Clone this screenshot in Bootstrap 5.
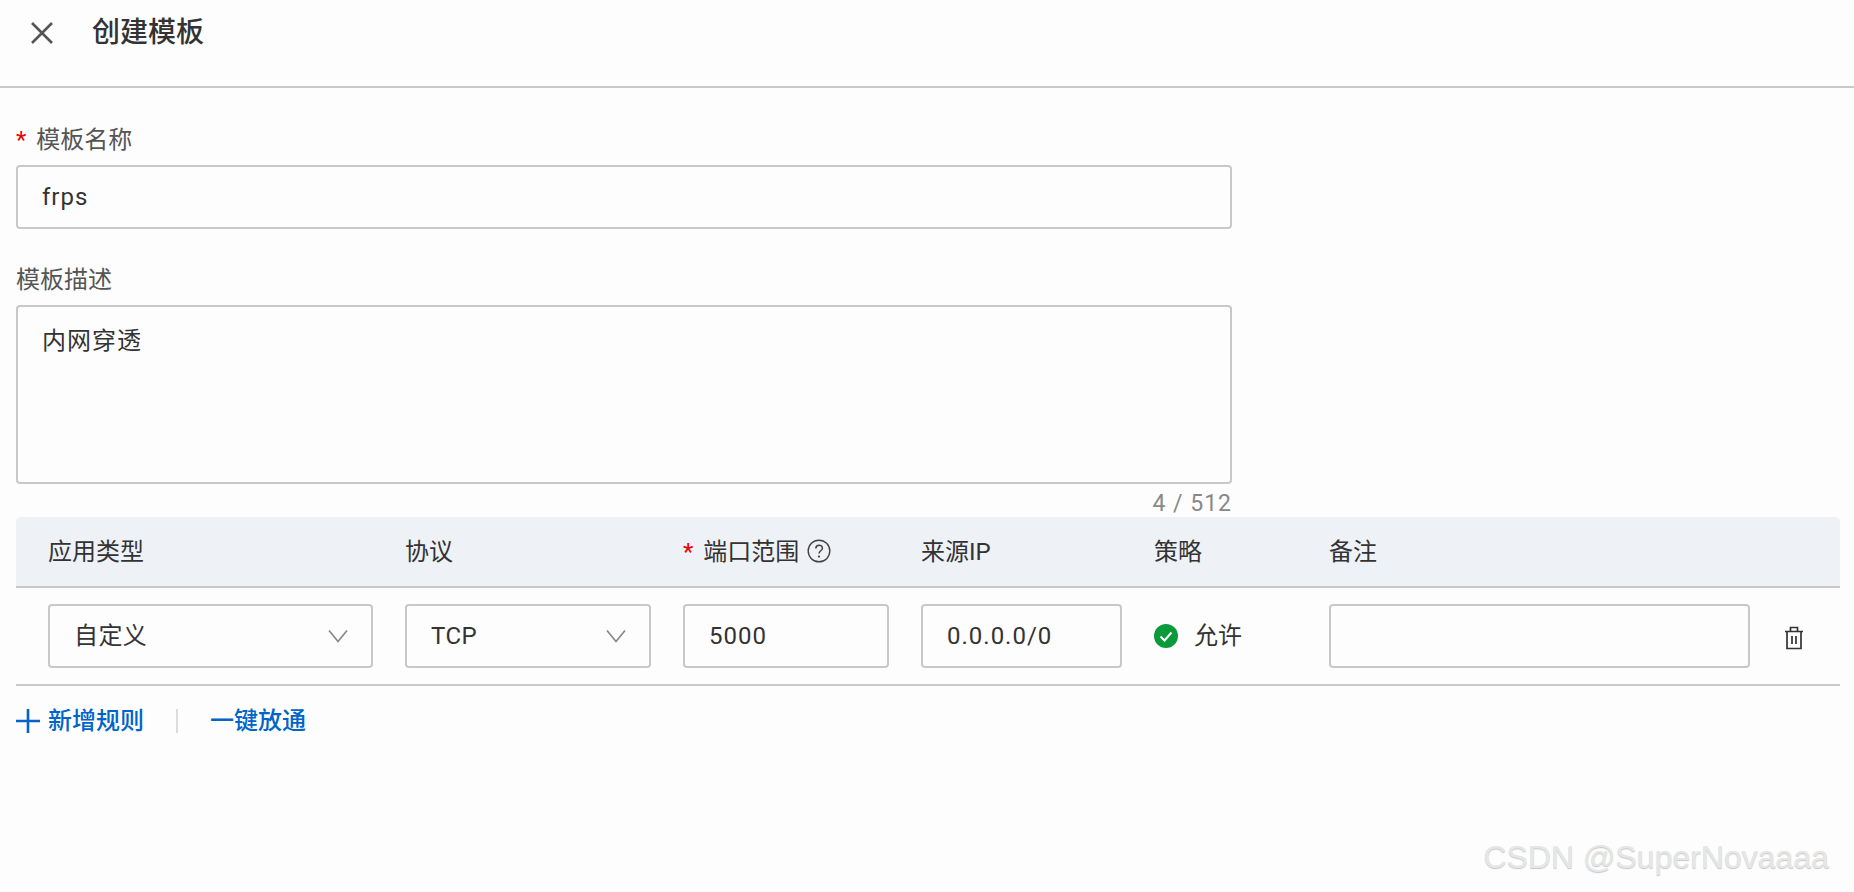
<!DOCTYPE html>
<html lang="zh">
<head>
<meta charset="utf-8">
<title>创建模板</title>
<link href="https://cdn.jsdelivr.net/npm/bootstrap@5.3.0/dist/css/bootstrap.min.css" rel="stylesheet">
<style>
html,body{height:100%}
body{background:#fdfdfd;color:#333;font-family:Roboto,"Noto Sans CJK SC",sans-serif;font-size:24px;overflow:hidden;position:relative}
.tpl-head{height:88px;border-bottom:2px solid #c9c9c9;padding:0 0 18px 29px;gap:37px}
.tpl-head h1{font-size:28px;font-weight:500;margin:0;color:#333;line-height:1;position:relative;top:-1px}
.tpl-close{margin-bottom:3px}
.tpl-body{padding:36px 14px 0 16px}
.tpl-label{font-size:24px;line-height:32px;color:#555;margin-bottom:9px;display:block}
.req{color:#e00;margin-right:10px}
.tpl-field{width:1216px}
.form-control.tpl-input,.form-select.tpl-input,.form-control.tpl-area{background-color:#fff0;border:2px solid #c8c8c8;border-radius:4px;color:#333;font-size:24px;letter-spacing:1px;box-shadow:none}
.form-control.tpl-input,.form-select.tpl-input{height:64px;padding:0 24px;line-height:60px}
.form-control.tpl-area{height:179px;padding:18px 24px;resize:none;line-height:32px}
.form-select.tpl-input{background-image:url("data:image/svg+xml,%3Csvg xmlns='http://www.w3.org/2000/svg' viewBox='0 0 20 14'%3E%3Cpath d='M1 1.5l9 11 9-11' fill='none' stroke='%23888' stroke-width='1.7'/%3E%3C/svg%3E");background-size:20px 14px;background-position:right 23px center;padding-right:50px;letter-spacing:.4px}
.tpl-name{margin-bottom:35px}
.tpl-count{font-size:23px;line-height:26px;color:#888;text-align:right;letter-spacing:1px;margin-top:7px}
.tpl-table{width:1824px;table-layout:fixed;border-collapse:separate;border-spacing:0;margin:0}
.tpl-table th{background:#eef1f6;height:71px;font-weight:400;font-size:24px;color:#333;border-bottom:2px solid #c9c9c9;padding:0;vertical-align:middle}
.tpl-table th:first-child{border-top-left-radius:5px}
.tpl-table th:last-child{border-top-right-radius:5px}
.tpl-table td{height:98px;border-bottom:2px solid #c9c9c9;padding:0;vertical-align:middle;background:transparent}
.tpl-table th:not(:last-child),.tpl-table td:not(:last-child){padding-right:32px}
.c0{width:32px}.c1{width:357px}.c2{width:278px}.c3{width:238px}.c4{width:233px}.c5{width:175px}.c6{width:453px}.c7{width:58px}
.tpl-table th:first-child,.tpl-table td:first-child{padding-right:0}
.tpl-help{vertical-align:-3px;margin-left:8px}
.tpl-allow{gap:16px}
.tpl-trash{position:relative;left:-17px}
.tpl-actions{height:70px;color:#0064c8;font-weight:500;font-size:24px}
.tpl-actions a{color:#0064c8;text-decoration:none}
.tpl-plus{margin-right:8px}
.tpl-sep{width:2px;height:24px;background:#dcdcdc;margin:0 32px}
.tpl-mark{position:absolute;right:25px;bottom:17px;font-family:"Liberation Sans",sans-serif;font-size:32px;line-height:36px;color:#e6e6e6;text-shadow:0 1px 1px #c8c8c8}
</style>
</head>
<body>
<header class="tpl-head d-flex align-items-center">
  <svg class="tpl-close" width="26" height="26" viewBox="0 0 26 26" aria-label="关闭"><path d="M3 3l20 20M23 3L3 23" stroke="#555" stroke-width="2.6" fill="none"/></svg>
  <h1>创建模板</h1>
</header>
<main class="tpl-body">
  <div class="tpl-field tpl-name">
    <label class="tpl-label"><span class="req">*</span>模板名称</label>
    <input class="form-control tpl-input" value="frps">
  </div>
  <div class="tpl-field">
    <label class="tpl-label">模板描述</label>
    <textarea class="form-control tpl-area">内网穿透</textarea>
    <div class="tpl-count">4 / 512</div>
  </div>
  <table class="tpl-table">
    <colgroup><col class="c0"><col class="c1"><col class="c2"><col class="c3"><col class="c4"><col class="c5"><col class="c6"><col class="c7"></colgroup>
    <thead>
      <tr>
        <th></th><th>应用类型</th><th>协议</th>
        <th><span class="req">*</span>端口范围<svg class="tpl-help" width="24" height="24" viewBox="0 0 24 24"><circle cx="12" cy="12" r="10.8" fill="none" stroke="#444" stroke-width="1.4"/><path d="M8.8 9.4c0-4.2 6.6-4.2 6.6-.2 0 2.6-3.4 2.6-3.4 5.4" fill="none" stroke="#444" stroke-width="1.5"/><circle cx="12" cy="17.6" r="1.1" fill="#444"/></svg></th>
        <th>来源IP</th><th>策略</th><th>备注</th><th></th>
      </tr>
    </thead>
    <tbody>
      <tr>
        <td></td>
        <td><select class="form-select tpl-input"><option>自定义</option></select></td>
        <td><select class="form-select tpl-input"><option>TCP</option></select></td>
        <td><input class="form-control tpl-input" value="5000"></td>
        <td><input class="form-control tpl-input" value="0.0.0.0/0"></td>
        <td><div class="d-flex align-items-center tpl-allow"><svg width="24" height="24" viewBox="0 0 24 24"><circle cx="12" cy="12" r="12" fill="#0a9a3c"/><path d="M6.5 12.5l4 4 7-8" fill="none" stroke="#fff" stroke-width="2"/></svg><span>允许</span></div></td>
        <td><input class="form-control tpl-input"></td>
        <td class="text-center"><svg class="tpl-trash" width="20" height="24" viewBox="0 0 20 24"><path d="M1 5.5h18M6.5 5.5V1.5h7v4M3 5.5v17h14v-17M8 10v8M12 10v8" fill="none" stroke="#333" stroke-width="1.7"/></svg></td>
      </tr>
    </tbody>
  </table>
  <div class="tpl-actions d-flex align-items-center">
    <svg class="tpl-plus" width="24" height="24" viewBox="0 0 24 24"><path d="M12 0v24M0 12h24" stroke="#0064c8" stroke-width="2.6" fill="none"/></svg>
    <a href="#">新增规则</a>
    <span class="tpl-sep"></span>
    <a href="#">一键放通</a>
  </div>
</main>
<div class="tpl-mark">CSDN @SuperNovaaaa</div>
<script src="https://cdn.jsdelivr.net/npm/bootstrap@5.3.0/dist/js/bootstrap.bundle.min.js"></script>
</body>
</html>
